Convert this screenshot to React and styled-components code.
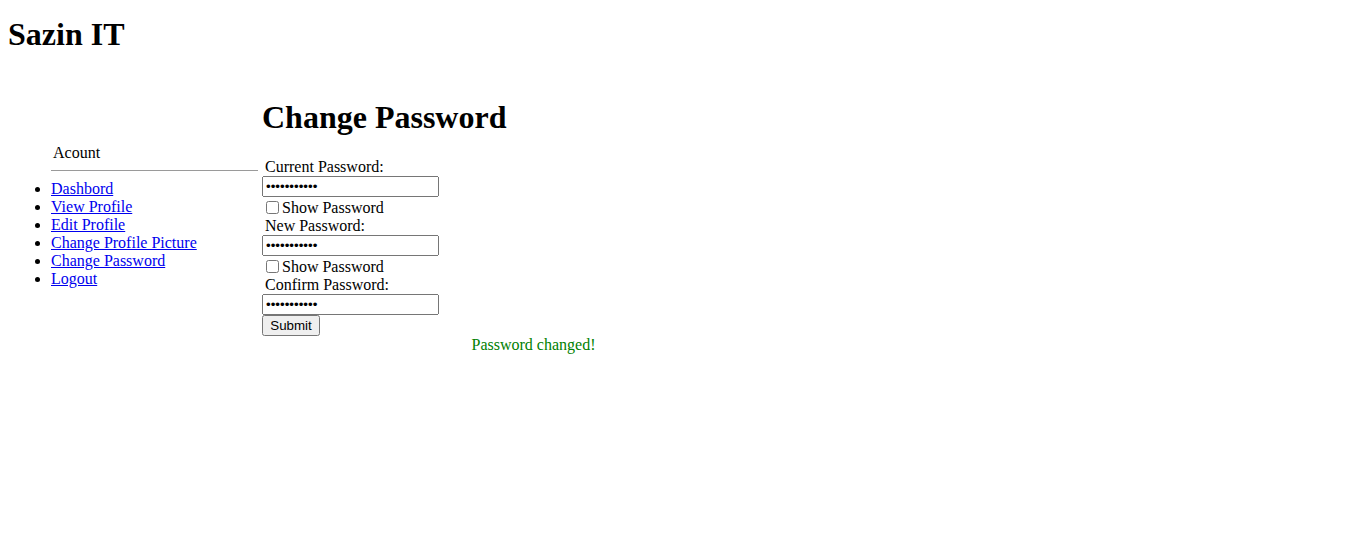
import React from 'react'
import styled, { createGlobalStyle } from 'styled-components'

const GlobalStyle = createGlobalStyle`
    body{
        margin: 8px;
        font-family: "Liberation Serif", "Times New Roman", serif;
        font-size: 16px;
        color: #000;
        background: #fff;
    }
`;

const links = ['Dashbord', 'View Profile', 'Edit Profile', 'Change Profile Picture', 'Change Password', 'Logout']

const PasswordField = ({ label, withToggle = true }) => (
    <Field>
        <label>{label}</label>
        <input type="password" defaultValue="12345678901" readOnly />
        {withToggle && (
            <Toggle>
                <input type="checkbox" />
                Show Password
            </Toggle>
        )}
    </Field>
)

const App = () => {
    return (
        <>
            <GlobalStyle />
            <Brand>Sazin IT</Brand>
            <Layout>
                <Sidebar>
                    <SideTitle>Acount</SideTitle>
                    <Divider />
                    <NavList>
                        {links.map(l => (
                            <li key={l}><a href="#">{l}</a></li>
                        ))}
                    </NavList>
                </Sidebar>
                <Main>
                    <Heading>Change Password</Heading>
                    <Form onSubmit={e => e.preventDefault()}>
                        <PasswordField label="Current Password:" />
                        <PasswordField label="New Password:" />
                        <PasswordField label="Confirm Password:" withToggle={false} />
                        <SubmitButton type="submit">Submit</SubmitButton>
                    </Form>
                    <Message>Password changed!</Message>
                </Main>
            </Layout>
        </>
    )
}

const Brand = styled.h1`
    font-size: 32px;
    font-weight: bold;
    margin: 8px 0 0;
    line-height: 37px;
`;

const Layout = styled.div`
    display: flex;
    align-items: flex-start;
    margin-top: 30px;
`;

const Sidebar = styled.div`
    width: 250px;
    margin-top: 61px;
    padding-left: 3px;
    box-sizing: border-box;
`;

const SideTitle = styled.div`
    margin-left: 42px;
    line-height: 18px;
`;

const Divider = styled.hr`
    margin: 8px 0 9px 40px;
    border: none;
    border-top: 1px solid #9a9a9a;
`;

const NavList = styled.ul`
    margin: 0;
    padding-left: 40px;
    li{
        line-height: 18px;
    }
    a{
        color: #0000ee;
    }
`;

const Main = styled.div`
    width: 543px;
    padding-left: 4px;
`;

const Heading = styled.h1`
    font-size: 32px;
    margin: 16px 0 22px 0;
    line-height: 37px;
`;

const Form = styled.form`
    display: flex;
    flex-direction: column;
    align-items: flex-start;
`;

const Field = styled.div`
    display: flex;
    flex-direction: column;
    align-items: flex-start;
    label{
        padding-left: 3px;
        line-height: 18px;
    }
    input[type="password"]{
        width: 177px;
        height: 21px;
        box-sizing: border-box;
        margin: 0;
    }
`;

const Toggle = styled.span`
    display: flex;
    align-items: center;
    line-height: 18px;
    margin-top: 1px;
    input{
        margin: 3px 3px 3px 4px;
    }
`;

const SubmitButton = styled.button`
    margin: 0;
    width: 58px;
    height: 21px;
`;

const Message = styled.div`
    text-align: center;
    color: #008000;
    line-height: 18px;
`;

export default App
